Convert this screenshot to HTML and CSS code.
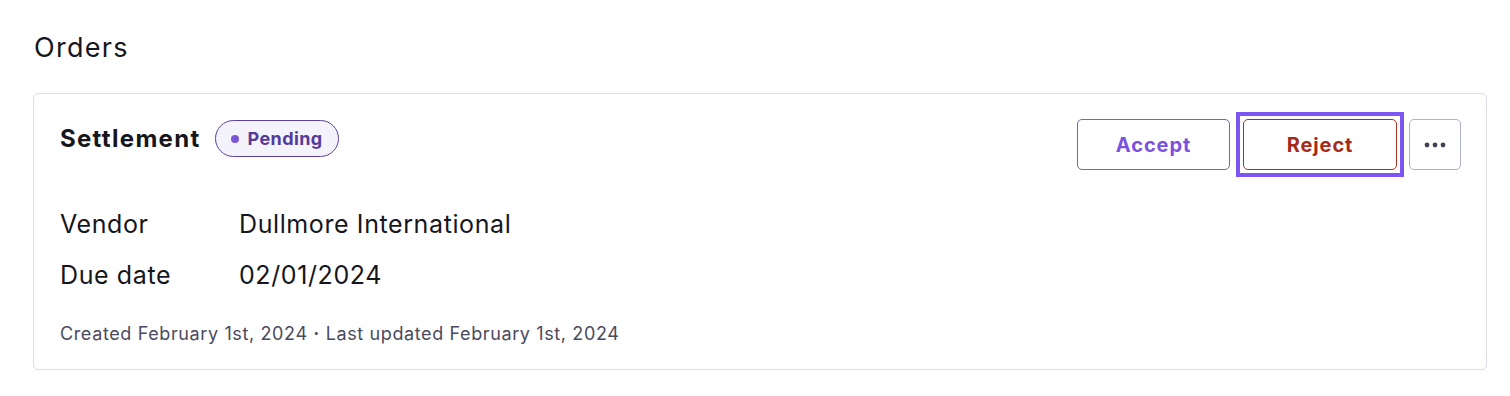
FILE: index.html
```html
<!DOCTYPE html>
<html lang="en">
<head>
<meta charset="utf-8">
<title>Orders</title>
<link rel="stylesheet" href="styles.css">
</head>
<body>
<main class="page">
  <h1 class="page-title">Orders</h1>
  <section class="card">
    <div class="card-head">
      <div class="title-group">
        <h2 class="card-title">Settlement</h2>
        <span class="badge"><span class="badge-dot"></span>Pending</span>
      </div>
      <div class="actions">
        <button class="btn btn-accept" type="button">Accept</button>
        <button class="btn btn-reject is-focused" type="button">Reject</button>
        <button class="btn btn-more" type="button" aria-label="More actions">
          <svg width="22" height="6" viewBox="0 0 22 6"><circle cx="3" cy="3" r="2.4"/><circle cx="11" cy="3" r="2.4"/><circle cx="19" cy="3" r="2.4"/></svg>
        </button>
      </div>
    </div>
    <dl class="details">
      <dt>Vendor</dt><dd>Dullmore International</dd>
      <dt>Due date</dt><dd>02/01/2024</dd>
    </dl>
    <p class="meta">Created February 1st, 2024 <span class="sep">·</span> Last updated February 1st, 2024</p>
  </section>
</main>
</body>
</html>
```
FILE: styles.css
```css
* { box-sizing: border-box; }
html, body { margin: 0; background: #fff; }
body {
  font-family: Inter, "Noto Sans", sans-serif;
  color: #16161d;
}
.page { padding: 28px 23px 0 33px; }
.page-title {
  margin: 0 0 25px 1px;
  font-size: 27px;
  font-weight: 400;
  letter-spacing: 1.3px;
  line-height: 40px;
}
.card {
  border: 1px solid #dddde6;
  border-radius: 5px;
  padding: 25px 25px 25px 26px;
}
.card-head {
  display: flex;
  justify-content: space-between;
  align-items: flex-start;
}
.title-group {
  display: flex;
  align-items: center;
  gap: 14px;
  padding-top: 1px;
}
.card-title {
  margin: 0;
  font-size: 24px;
  font-weight: 700;
  letter-spacing: 1.3px;
}
.badge {
  display: inline-flex;
  align-items: center;
  gap: 9px;
  height: 37px;
  padding: 0 15px 0 15px;
  border: 1px solid #5b3e9e;
  border-radius: 19px;
  background: #f4f3fb;
  color: #553a9c;
  font-size: 18px;
  font-weight: 700;
  letter-spacing: 0.4px;
}
.badge-dot {
  width: 8px;
  height: 8px;
  border-radius: 50%;
  background: #7a52dc;
}
.actions {
  display: flex;
  gap: 13px;
}
.btn {
  height: 51px;
  border-radius: 5px;
  background: #fff;
  font-family: Inter, "Noto Sans", sans-serif;
  font-size: 20px;
  font-weight: 700;
  letter-spacing: 0.9px;
  cursor: pointer;
}
.btn-accept {
  width: 153px;
  border: 1px solid #7a5bdc;
  color: #7b52e0;
}
.btn-reject {
  width: 154px;
  border: 1px solid #a5321f;
  color: #a52a1a;
}
.is-focused {
  position: relative;
  outline: none;
}
.is-focused::after {
  content: "";
  position: absolute;
  inset: -8px;
  border: 4px solid #7d55f2;
}
.btn-more {
  width: 52px;
  margin-left: -1px;
  border: 1px solid #aeb2c2;
  display: flex;
  align-items: center;
  justify-content: center;
  fill: #3f4257;
}
.details {
  display: grid;
  grid-template-columns: 179px 1fr;
  row-gap: 18px;
  margin: 38px 0 0;
  font-size: 25px;
  letter-spacing: 0.6px;
  line-height: 33px;
}
.details dt, .details dd { margin: 0; }
.meta {
  margin: 31px 0 0;
  font-size: 18px;
  letter-spacing: 0.62px;
  color: #4b4a5e;
}
.sep { font-weight: 700; }
```
